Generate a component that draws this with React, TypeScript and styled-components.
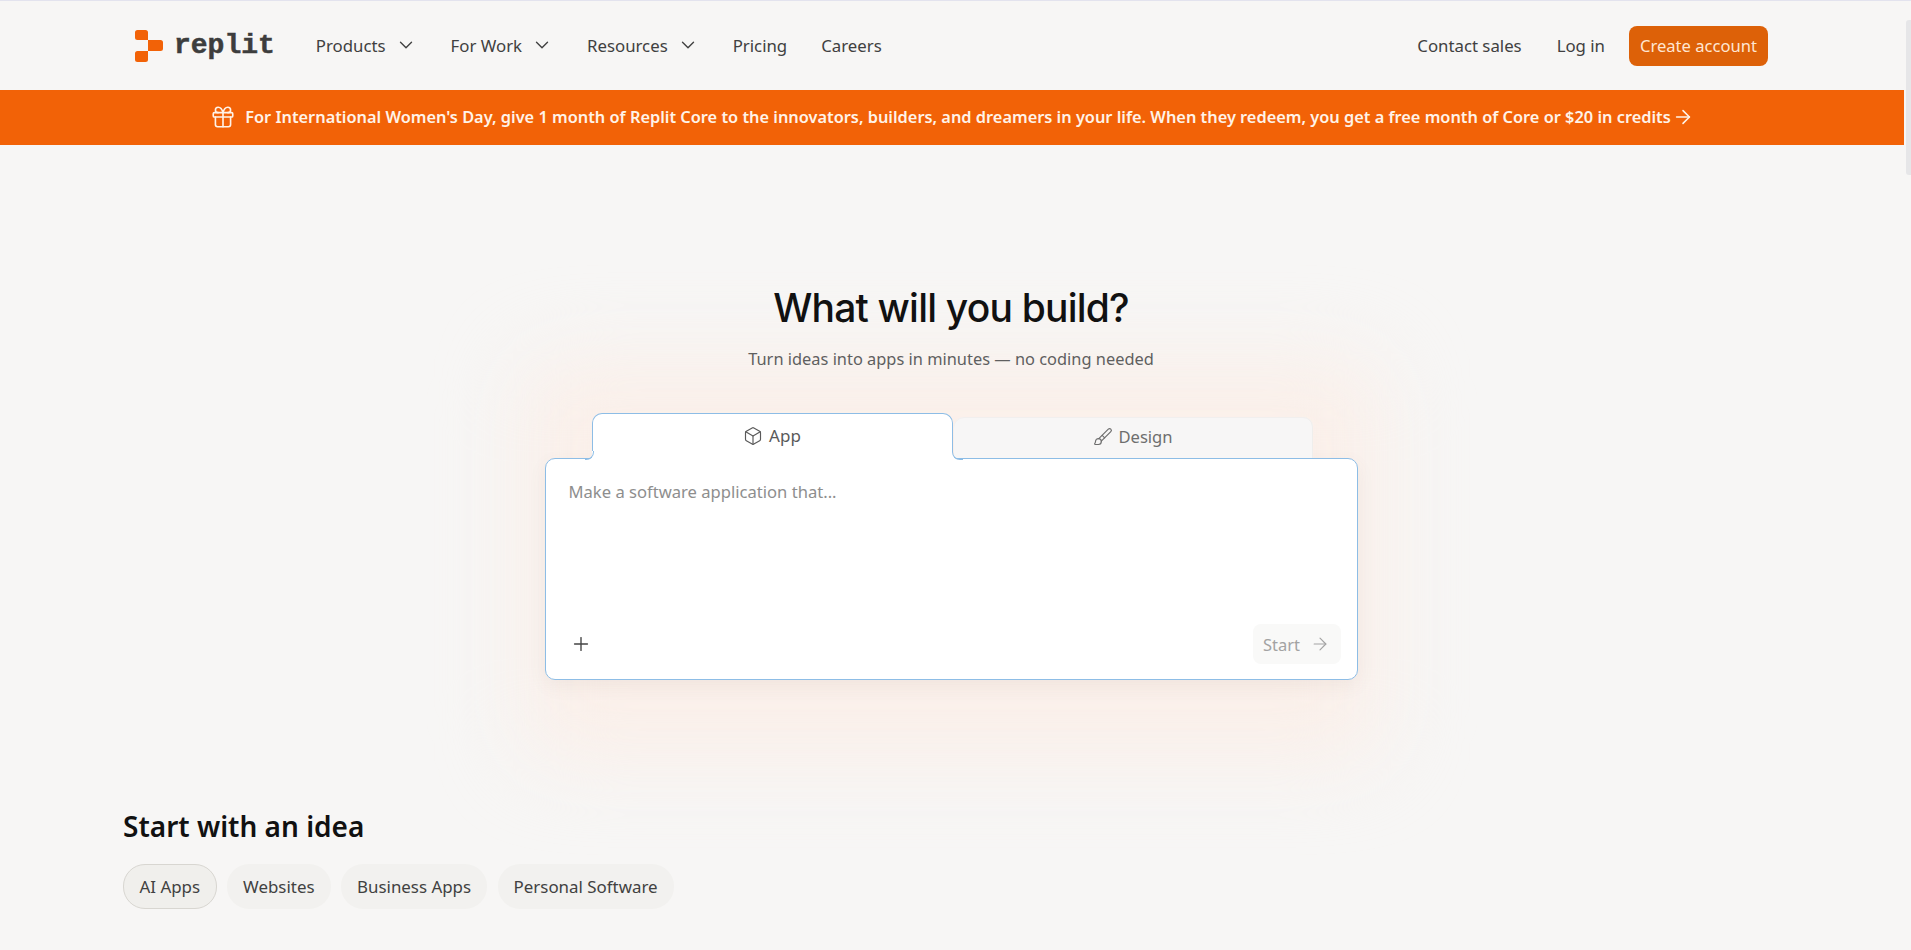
import React from "react";
import styled, { createGlobalStyle } from "styled-components";
import { Box as BoxIcon, Brush, Gift, ArrowRight, ChevronDown, Plus } from "lucide-react";

const Global = createGlobalStyle`
  html, body { margin: 0; padding: 0; height: 100%; overflow: hidden; background: #f7f6f5; }
  * { box-sizing: border-box; }
  #root { height: 100%; }
`;

const Shell = styled.div`
  display: flex;
  height: 950px;
  font-family: "Noto Sans", Roboto, sans-serif;
  color: #3d3d3d;
  border-top: 1px solid #e3e3ee;
  padding-top: 1px;
`;

const Page = styled.main`
  flex: 1;
  min-width: 0;
  display: flex;
  flex-direction: column;
  overflow: hidden;
`;

const ScrollTrack = styled.div`
  width: 7px;
  flex: none;
  background: #f7f6f5;
  padding: 18px 0 0 2px;
`;

const ScrollThumb = styled.div`
  height: 155px;
  background: #e6e6e8;
  border-radius: 3px 0 0 3px;
`;

const Nav = styled.nav`
  height: 88px;
  flex: none;
  display: flex;
  align-items: center;
  padding: 0 136px 2px 135px;
`;

const Logo = styled.div`
  display: flex;
  align-items: center;
  gap: 11px;
  margin: 2px 41px 0 0;
`;

const LogoText = styled.span`
  font-family: "Liberation Mono", monospace;
  font-weight: 700;
  font-size: 28px;
  color: #3d3d3d;
  line-height: 1;
  -webkit-text-stroke: 0.5px #3d3d3d;
`;

const NavLinks = styled.div`
  display: flex;
  align-items: center;
  gap: 34px;
`;

const NavLink = styled.a`
  display: inline-flex;
  align-items: center;
  gap: 9px;
  font-size: 16.8px;
  color: #404040;
  white-space: nowrap;
`;

const NavRight = styled.div`
  margin-left: auto;
  display: flex;
  align-items: center;
  gap: 35px;
`;

const CreateButton = styled.button`
  height: 40px;
  width: 139px;
  border: 0;
  border-radius: 8px;
  padding: 0 0 2px;
  background: #dd6108;
  color: #ffe6d2;
  font: inherit;
  font-size: 16.6px;
  margin: 2px 0 0 -11px;
`;

const Banner = styled.div`
  height: 55px;
  flex: none;
  background: #f26207;
  color: #fff3e8;
  display: flex;
  align-items: center;
  justify-content: center;
  gap: 9px;
  padding-bottom: 2px;
  font-size: 16.35px;
  font-weight: 600;
`;

const BannerArrow = styled.span`
  display: inline-flex;
  margin-left: -8px;
`;

const Hero = styled.section`
  position: relative;
  display: flex;
  flex-direction: column;
  align-items: center;
  padding: 136px 2px 0 0;
`;

const Glow = styled.div`
  position: absolute;
  left: 50%;
  top: 215px;
  width: 860px;
  height: 400px;
  transform: translateX(-50%);
  background: #faefe9;
  filter: blur(40px);
  border-radius: 40px;
`;

const Title = styled.h1`
  position: relative;
  margin: 0;
  font-family: Inter, sans-serif;
  font-weight: 450;
  font-size: 39px;
  line-height: 54px;
  letter-spacing: -0.8px;
  color: #111;
`;

const Subtitle = styled.p`
  position: relative;
  margin: 12px 0 0;
  font-size: 16.4px;
  line-height: 24px;
  color: #5f5f5f;
`;

const Composer = styled.div`
  position: relative;
  width: 813px;
  margin-top: 42px;
`;

const TabRow = styled.div`
  position: relative;
  z-index: 2;
  height: 45px;
  padding-left: 47px;
  display: flex;
  align-items: flex-end;
`;

const TabActive = styled.div`
  position: relative;
  z-index: 2;
  align-self: flex-start;
  width: 361px;
  height: 38px;
  padding-top: 10px;
  background: #fff;
  border: 1px solid #8dbde6;
  border-bottom: 0;
  border-radius: 10px 10px 0 0;
  box-shadow: 0 8px 0 #fff;
  display: flex;
  align-items: flex-start;
  justify-content: center;
  gap: 6px;
  font-size: 17px;
  color: #5a5a5a;
  &::before {
    content: "";
    position: absolute;
    top: 100%;
    left: -8px;
    width: 8px;
    height: 8px;
    border: solid #8dbde6;
    border-width: 0 1px 1px 0;
    border-bottom-right-radius: 8px;
    box-shadow: 4px 4px 0 #fff;
  }
  &::after {
    content: "";
    position: absolute;
    top: 100%;
    left: 100%;
    width: 10px;
    height: 8px;
    border: solid #8dbde6;
    border-width: 0 0 1px 1px;
    border-bottom-left-radius: 8px;
    box-shadow: -4px 4px 0 #fff;
  }
`;

const TabIdle = styled.div`
  width: 359px;
  height: 41px;
  margin-left: 1px;
  padding-top: 8px;
  background: #f7f6f6;
  border-radius: 10px 10px 0 0;
  box-shadow: inset 0 1px 0 #f1efee, inset -1px 0 0 #efeeec;
  display: flex;
  align-items: flex-start;
  justify-content: center;
  gap: 5px;
  font-size: 16.6px;
  color: #6e6e6e;
`;

const TabIconWrap = styled.span`
  display: inline-flex;
  padding-top: 2px;
`;

const InputBox = styled.div`
  height: 222px;
  background: #fff;
  border: 1px solid #8dbde6;
  border-radius: 10px;
  box-shadow: 0 6px 18px rgba(120, 100, 90, 0.07);
  padding: 21px 16px 15px 23px;
  display: flex;
  flex-direction: column;
  justify-content: space-between;
`;

const Placeholder = styled.div`
  font-size: 16.6px;
  line-height: 24px;
  color: #8e8e8e;
`;

const InputFooter = styled.div`
  display: flex;
  align-items: center;
  justify-content: space-between;
`;

const AddButton = styled.span`
  display: inline-flex;
  color: #444;
  margin-left: 1px;
`;

const StartButton = styled.span`
  height: 40px;
  width: 88px;
  display: inline-flex;
  align-items: center;
  justify-content: center;
  gap: 10px;
  background: #f9f9f8;
  border-radius: 8px;
  font-size: 16.5px;
  color: #a3a3a3;
`;

const Ideas = styled.section`
  padding: 0 0 0 123px;
  margin-top: 128px;
  position: relative;
`;

const IdeasTitle = styled.h2`
  margin: 0;
  font-size: 28px;
  line-height: 36px;
  font-weight: 600;
  color: #111;
`;

const Chips = styled.div`
  display: flex;
  gap: 10.5px;
  margin-top: 20px;
`;

const Chip = styled.span<{ $active?: boolean }>`
  height: 45px;
  padding: 0 ${(p) => (p.$active ? "15.5px" : "15px")};
  display: inline-flex;
  align-items: center;
  border-radius: 22px;
  font-size: 16.9px;
  color: #414141;
  background: ${(p) => (p.$active ? "#f0efec" : "#f2f1ef")};
  border: 1px solid ${(p) => (p.$active ? "#d8d6d1" : "transparent")};
`;

const LogoMark = () => (
  <svg width="28" height="32" viewBox="0 0 28 32" fill="#f26207">
    <path d="M0 2.5A2.5 2.5 0 0 1 2.5 0h8A2.5 2.5 0 0 1 13 2.5V10H2.5A2.5 2.5 0 0 1 0 7.5z" />
    <path d="M13 10h12.5a2.5 2.5 0 0 1 2.5 2.5v6a2.5 2.5 0 0 1-2.5 2.5H13z" />
    <path d="M2.5 21H13v8.5a2.5 2.5 0 0 1-2.5 2.5h-8A2.5 2.5 0 0 1 0 29.5v-6A2.5 2.5 0 0 1 2.5 21z" />
  </svg>
);

export default function App() {
  return (
    <Shell>
      <Global />
      <Page>
        <Nav>
          <Logo>
            <LogoMark />
            <LogoText>replit</LogoText>
          </Logo>
          <NavLinks>
            <NavLink>Products <ChevronDown size={22} strokeWidth={1.5} /></NavLink>
            <NavLink>For Work <ChevronDown size={22} strokeWidth={1.5} /></NavLink>
            <NavLink>Resources <ChevronDown size={22} strokeWidth={1.5} /></NavLink>
            <NavLink>Pricing</NavLink>
            <NavLink>Careers</NavLink>
          </NavLinks>
          <NavRight>
            <NavLink>Contact sales</NavLink>
            <NavLink>Log in</NavLink>
            <CreateButton>Create account</CreateButton>
          </NavRight>
        </Nav>
        <Banner>
          <Gift size={26} strokeWidth={1.5} />
          <span>For International Women's Day, give 1 month of Replit Core to the innovators, builders, and dreamers in your life. When they redeem, you get a free month of Core or $20 in credits</span>
          <BannerArrow><ArrowRight size={22} strokeWidth={1.7} /></BannerArrow>
        </Banner>
        <Hero>
          <Glow />
          <Title>What will you build?</Title>
          <Subtitle>Turn ideas into apps in minutes — no coding needed</Subtitle>
          <Composer>
            <TabRow>
              <TabActive>
                <TabIconWrap><BoxIcon size={20} strokeWidth={1.4} /></TabIconWrap>
                App
              </TabActive>
              <TabIdle>
                <TabIconWrap><Brush size={20} strokeWidth={1.4} /></TabIconWrap>
                Design
              </TabIdle>
            </TabRow>
            <InputBox>
              <Placeholder>Make a software application that...</Placeholder>
              <InputFooter>
                <AddButton><Plus size={22} strokeWidth={1.5} /></AddButton>
                <StartButton>Start <ArrowRight size={20} strokeWidth={1.4} /></StartButton>
              </InputFooter>
            </InputBox>
          </Composer>
        </Hero>
        <Ideas>
          <IdeasTitle>Start with an idea</IdeasTitle>
          <Chips>
            <Chip $active>AI Apps</Chip>
            <Chip>Websites</Chip>
            <Chip>Business Apps</Chip>
            <Chip>Personal Software</Chip>
          </Chips>
        </Ideas>
      </Page>
      <ScrollTrack><ScrollThumb /></ScrollTrack>
    </Shell>
  );
}
